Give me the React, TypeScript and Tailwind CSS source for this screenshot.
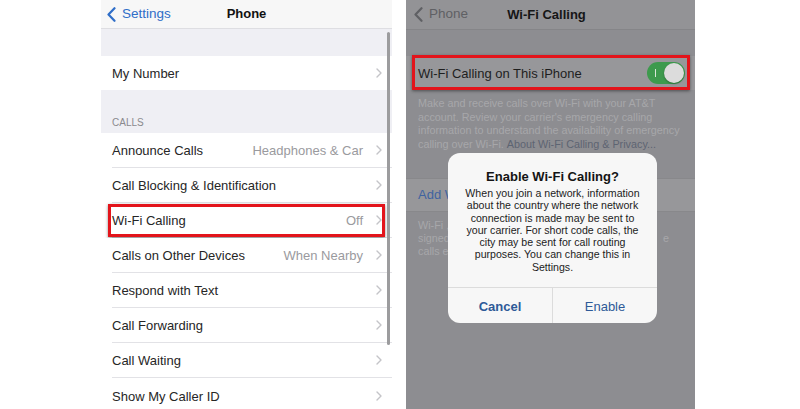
import React from "react";

const font = { fontFamily: '"Liberation Sans", Arial, sans-serif' };

function Chevron({ color = "#c4c4c8" }: { color?: string }) {
  return (
    <svg width="6" height="10" viewBox="0 0 6 10" className="shrink-0">
      <path d="M1 1 L5 5 L1 9" fill="none" stroke={color} strokeWidth="1.4" strokeLinecap="round" strokeLinejoin="round" />
    </svg>
  );
}

function BackChevron({ color }: { color: string }) {
  return (
    <svg width="9" height="15" viewBox="0 0 9 15" className="shrink-0">
      <path d="M7.5 1.2 L1.5 7.5 L7.5 13.8" fill="none" stroke={color} strokeWidth="2.2" strokeLinecap="round" strokeLinejoin="round" />
    </svg>
  );
}

function Row({ label, value, highlight, last }: { label: string; value?: string; highlight?: boolean; last?: boolean }) {
  return (
    <div className="relative h-[35px] bg-white pl-[11px]">
      <div className={`flex h-full items-center pr-[10px] ${last ? "" : "border-b border-[#e2e2e6]"}`}>
        <span className="flex-1 pt-[2px] text-[13px] text-[#262626]">{label}</span>
        {value && <span className="mr-[13px] pt-[2px] text-[13px] text-[#9a9a9e]">{value}</span>}
        <Chevron />
      </div>
      {highlight && (
        <div className="absolute left-[7px] right-[7px] top-[1px] bottom-[1px] border-[3px] border-[#e3141b] shadow-[0_1px_3px_rgba(0,0,0,0.45)]" />
      )}
    </div>
  );
}

function LeftPanel() {
  return (
    <div className="relative h-[409px] w-[291px] overflow-hidden bg-[#efeff4]">
      <div className="flex h-[29px] items-center border-b border-[#dedee2] bg-[#f7f7f7] px-[6px]">
        <div className="flex w-[80px] items-center gap-[6px]">
          <BackChevron color="#2f6ec8" />
          <span className="text-[13.5px] text-[#2f6ec8]">Settings</span>
        </div>
        <div className="flex-1 pr-[80px] text-center text-[13px] font-bold text-[#111]">Phone</div>
      </div>
      <div className="h-[27px]" />
      <div className="flex h-[34px] items-center bg-white pl-[11px] pr-[10px]">
        <span className="flex-1 pt-[1px] text-[13px] text-[#262626]">My Number</span>
        <Chevron />
      </div>
      <div className="flex h-[43px] items-end pb-[3px] pl-[11px] text-[10px] text-[#8a8a8e]">CALLS</div>
      <Row label="Announce Calls" value="Headphones & Car" />
      <Row label="Call Blocking & Identification" />
      <Row label="Wi-Fi Calling" value="Off" highlight />
      <Row label="Calls on Other Devices" value="When Nearby" />
      <Row label="Respond with Text" />
      <Row label="Call Forwarding" />
      <Row label="Call Waiting" />
      <Row label="Show My Caller ID" last />
      <div className="absolute left-[286px] top-[32px] h-[313px] w-[2.5px] rounded-full bg-[#9c9c9e]" />
    </div>
  );
}

function FooterLine({ left, right }: { left: string; right?: string }) {
  return (
    <div className="relative h-[13px] whitespace-nowrap">
      <span>{left}</span>
      {right && <span className="absolute left-[245px] top-0">{right}</span>}
    </div>
  );
}

function RightPanel() {
  return (
    <div className="relative h-[409px] w-[289px] overflow-hidden bg-[#8d8d91]">
      <div className="flex h-[30px] items-center border-b border-[#858588] bg-[#939396] px-[8px]">
        <div className="flex w-[80px] items-center gap-[6px]">
          <BackChevron color="#5f6064" />
          <span className="text-[13.5px] text-[#5f6064]">Phone</span>
        </div>
        <div className="flex-1 pr-[88px] text-center text-[13px] font-bold text-[#161616]">Wi-Fi Calling</div>
      </div>
      <div className="h-[26px]" />
      <div className="relative flex h-[34px] items-center bg-[#97979a] pl-[12px] pr-[9px]">
        <span className="flex-1 pt-[1px] text-[13px] text-[#1e1e1e]">Wi-Fi Calling on This iPhone</span>
        <div className="relative mr-[1px] h-[22px] w-[38px] rounded-full bg-[#3d9a4d]">
          <div className="absolute left-[8px] top-[7px] h-[8px] w-[1px] bg-[#d8e8d8]" />
          <div className="absolute right-[1px] top-[1px] h-[20px] w-[20px] rounded-full bg-[#dcdcdc] shadow-[0_1px_2px_rgba(0,0,0,0.3)]" />
        </div>
        <div className="absolute left-[6px] right-[5px] top-[-1px] bottom-[0px] border-[3px] border-[#e3141b] shadow-[0_1px_3px_rgba(0,0,0,0.45)]" />
      </div>
      <div className="flex h-[53px] flex-col px-[12px] pt-[7px] text-[10.8px] leading-[13.5px] text-[#a7a7aa]">
        <div className="whitespace-nowrap">Make and receive calls over Wi-Fi with your AT&amp;T</div>
        <div className="whitespace-nowrap">account. Review your carrier's emergency calling</div>
        <div className="whitespace-nowrap">information to understand the availability of emergency</div>
        <div className="flex gap-[3px] whitespace-nowrap">
          <span>calling over Wi-Fi.</span>
          <span className="text-[#5d6472]">About Wi-Fi Calling &amp; Privacy...</span>
        </div>
      </div>
      <div className="h-[35px]" />
      <div className="flex h-[34px] items-center border-y border-[#88888b] bg-[#97979a] pl-[12px]">
        <span className="whitespace-nowrap text-[13px] text-[#3f63a0]">Add W</span>
      </div>
      <div className="px-[12px] pt-[7px] text-[10.8px] leading-[13px] text-[#a7a7aa]">
        <FooterLine left="Wi-Fi ," />
        <FooterLine left="signed" right="e" />
        <FooterLine left="calls e" />
      </div>

      <div className="absolute left-[42px] top-[153px] flex h-[170px] w-[209px] flex-col overflow-hidden rounded-[12px] bg-[#f7f7f7]">
        <div className="flex-1 px-[8px] pt-[16px] text-center">
          <div className="text-[13px] font-bold leading-[16px] text-[#141414]">Enable Wi-Fi Calling?</div>
          <div className="mt-[2px] text-[10.6px] leading-[12.3px] text-[#1c1c1c]">
            When you join a network, information
            <br />
            about the country where the network
            <br />
            connection is made may be sent to
            <br />
            your carrier. For short code calls, the
            <br />
            city may be sent for call routing
            <br />
            purposes. You can change this in
            <br />
            Settings.
          </div>
        </div>
        <div className="flex h-[36px] border-t border-[#dcdcdc]">
          <div className="flex flex-1 items-center justify-center border-r border-[#dcdcdc] pt-[2px] text-[13px] font-bold text-[#2e5a98]">Cancel</div>
          <div className="flex flex-1 items-center justify-center pt-[2px] text-[13px] text-[#2e5a98]">Enable</div>
        </div>
      </div>
    </div>
  );
}

export default function App() {
  return (
    <div style={font} className="flex h-[409px] w-[800px] overflow-hidden bg-white pl-[101px]">
      <LeftPanel />
      <div className="w-[14px]" />
      <RightPanel />
    </div>
  );
}
